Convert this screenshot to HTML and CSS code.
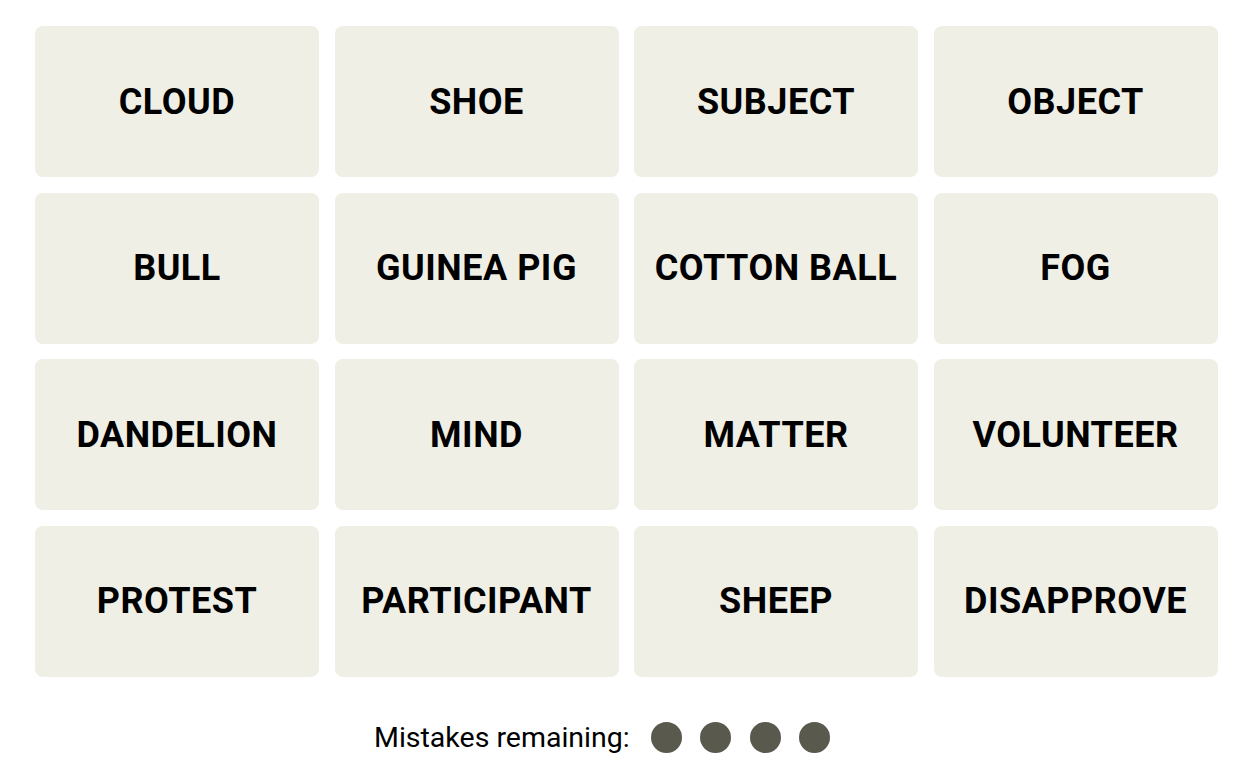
FILE: index.html
```html
<!doctype html>
<html>
<head>
<meta charset="utf-8">
<title>Connections</title>
<link rel="stylesheet" href="styles.css">
</head>
<body>
<div class="board">
	<div class="tile">CLOUD</div>
	<div class="tile">SHOE</div>
	<div class="tile">SUBJECT</div>
	<div class="tile">OBJECT</div>
	<div class="tile">BULL</div>
	<div class="tile">GUINEA PIG</div>
	<div class="tile">COTTON BALL</div>
	<div class="tile">FOG</div>
	<div class="tile">DANDELION</div>
	<div class="tile">MIND</div>
	<div class="tile">MATTER</div>
	<div class="tile">VOLUNTEER</div>
	<div class="tile">PROTEST</div>
	<div class="tile">PARTICIPANT</div>
	<div class="tile">SHEEP</div>
	<div class="tile">DISAPPROVE</div>
</div>
<div class="mistakes">
	<span class="label">Mistakes remaining:</span>
	<span class="dots">
		<i class="dot"></i><i class="dot"></i><i class="dot"></i><i class="dot"></i>
	</span>
</div>
</body>
</html>
```

FILE: styles.css
```css
*{padding:0; margin:0; box-sizing:border-box;}
body{background:#fff; font-family:Roboto, "Liberation Sans", sans-serif; color:#000;}
.board{display:grid; grid-template-columns:repeat(4,284px); grid-auto-rows:151px; gap:15.5px 15.5px; padding:26px 0 0 35px;}
.tile{background:#efefe6; border-radius:8px; display:flex; align-items:center; justify-content:center; font-weight:700; font-size:36px; letter-spacing:0.5px;}
.mistakes{display:flex; align-items:center; padding:0 0 0 374px; margin-top:45px; height:32px;}
.label{font-size:28.5px; font-weight:400; margin-right:21px;}
.dots{display:flex; gap:18.5px;}
.dot{display:block; width:31px; height:31px; border-radius:50%; background:#5a594e;}
```
